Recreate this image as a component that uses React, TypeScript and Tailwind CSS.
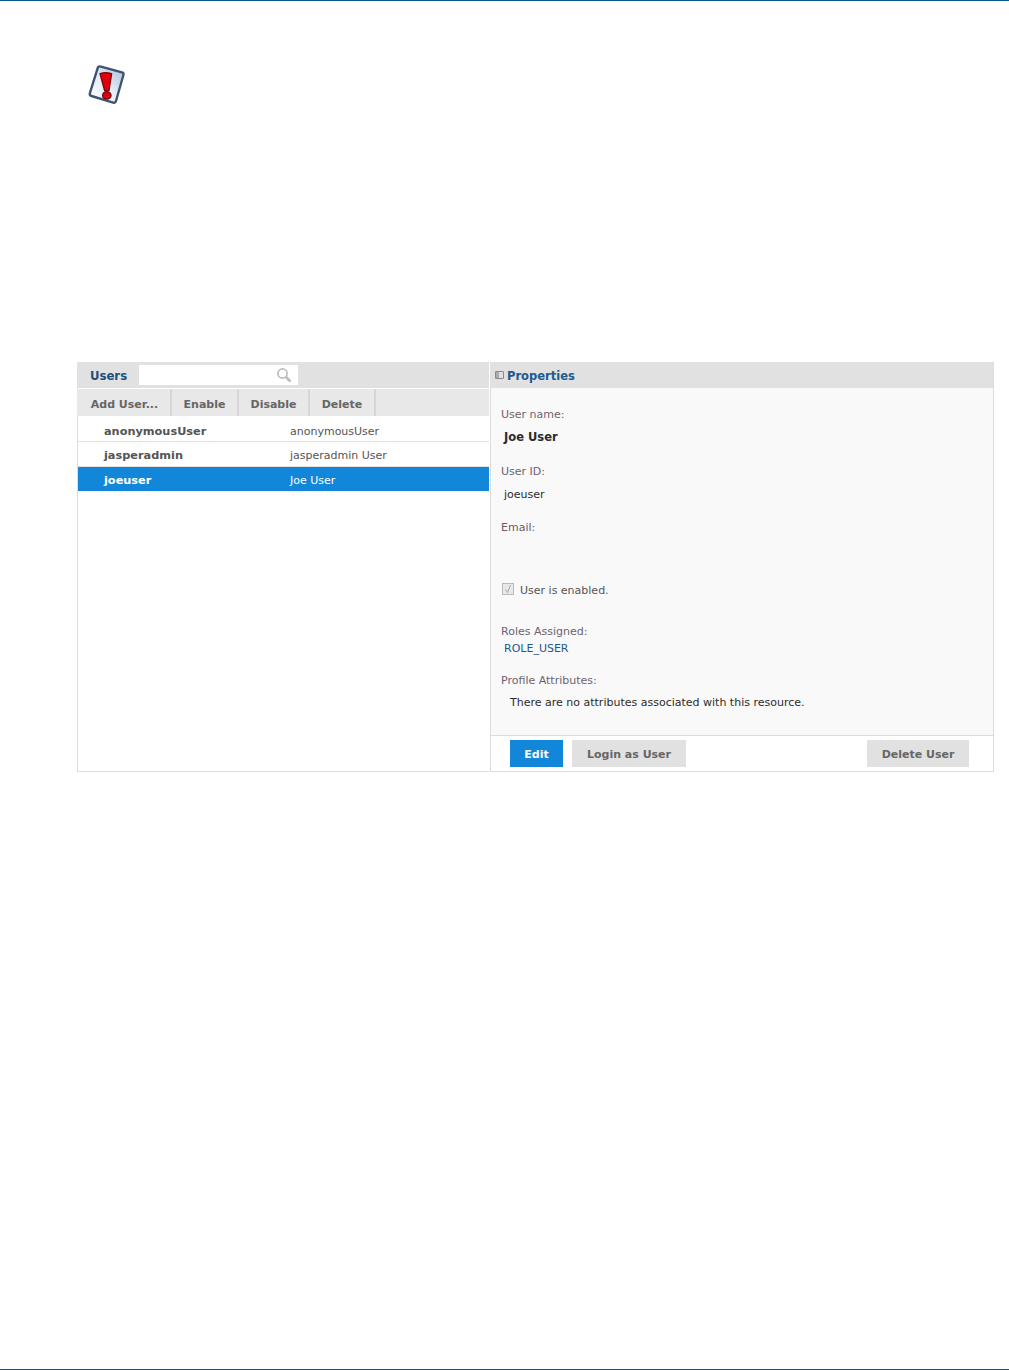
import React from 'react';

const font = 'font-["DejaVu_Sans",Verdana,sans-serif]';

const WarningIcon = () => (
  <svg width="42" height="42" viewBox="0 0 42 42" className="block">
    <defs>
      <linearGradient id="paper" x1="1" y1="0" x2="0" y2="1">
        <stop offset="0" stopColor="#a9bcdc" />
        <stop offset="0.5" stopColor="#e6ecf6" />
        <stop offset="1" stopColor="#ffffff" />
      </linearGradient>
    </defs>
    <path
      d="M12 3.2 Q13 2 15 2.6 L36 8.4 Q38 9 37.4 11 L30 37 Q29.4 39.2 27.2 38.6 L5.5 32 Q3.2 31.2 3.9 29 Z"
      fill="url(#paper)"
      stroke="#3f5475"
      strokeWidth="2.4"
      strokeLinejoin="round"
    />
    <path d="M14 9.6 Q19.5 7.8 25.6 9.6 L23 26.5 L18.6 26.5 Z" fill="#e2000f" stroke="#7a0a12" strokeWidth="1.4" strokeLinejoin="round" />
    <ellipse cx="20.8" cy="31.4" rx="4.2" ry="3.7" fill="#e2000f" stroke="#7a0a12" strokeWidth="1.4" />
  </svg>
);

const SearchIcon = () => (
  <svg width="16" height="16" viewBox="0 0 16 16" fill="none" stroke="#bdbdbd">
    <circle cx="6.5" cy="6.5" r="4.6" strokeWidth="1.7" />
    <path d="M10 10 L14.5 14.5" strokeWidth="2.6" />
  </svg>
);

const users = [
  { id: 'anonymousUser', name: 'anonymousUser', row: 'h-[26px] pt-[6px] border-b border-[#e2e2e2] text-[#555]', idClass: '' },
  { id: 'jasperadmin', name: 'jasperadmin User', row: 'h-[25px] pt-[2px] border-b border-[#e2e2e2] text-[#555]', idClass: 'mt-[2px]' },
  { id: 'joeuser', name: 'Joe User', row: 'h-6 pt-[2px] bg-[#1287d9] text-white', idClass: 'mt-[2px]' },
];

const tools = ['Add User...', 'Enable', 'Disable', 'Delete'];
const toolWidths = ['w-[95px]', 'w-[67px]', 'w-[71px]', 'w-[66px]'];

export default function App() {
  return (
    <div className={`${font} flex h-[1370px] flex-col justify-between bg-white`}>
      <div className="h-px bg-[#00598a]" />
      <div className="flex-1">
        <div className="mt-[63px] ml-[86px]">
          <WarningIcon />
        </div>
        <div className="mt-[256px] mr-[15px] ml-[77px] flex h-[410px] gap-px text-[11px] leading-none">
          <section className="flex w-[412px] flex-col border-b border-l border-[#dcdcdc]">
            <div className="-ml-px flex h-[26px] items-center bg-[#e1e1e1] pl-[13px]">
              <h2 className="mt-[3px] w-[49px] text-[11.7px] font-bold text-[#1c4f7c]">Users</h2>
              <div className="flex h-5 w-[159px] items-center justify-end bg-white pr-[6px]">
                <SearchIcon />
              </div>
            </div>
            <div className="mt-px -ml-px flex h-[27px] bg-[#e8e8e8]">
              {tools.map((t, i) => (
                <button key={t} className={`${toolWidths[i]} border-r-2 border-[#d6d6d6] pt-1 text-center text-[11px] font-bold text-[#666] ${i === 0 ? 'pl-[2px]' : ''}`}>
                  {t}
                </button>
              ))}
            </div>
            <div className="flex-1">
              {users.map((u) => (
                <div key={u.id} className={`flex items-center pl-[26px] ${u.row}`}>
                  <span className={`w-[186px] text-[11.3px] font-bold ${u.idClass}`}>{u.id}</span>
                  <span>{u.name}</span>
                </div>
              ))}
            </div>
          </section>
          <section className="flex flex-1 flex-col border-r border-b border-l border-[#dcdcdc]">
            <div className="-ml-px flex h-[26px] items-center gap-[3px] bg-[#e1e1e1] pl-[5px]">
              <span className="flex h-2 w-[9px] overflow-hidden rounded-[1px] border border-[#888]">
                <span className="w-[3px] bg-[#aaa]" />
              </span>
              <h2 className="mt-[3px] text-[11.5px] font-bold text-[#1c5a8f]">Properties</h2>
            </div>
            <div className="flex-1 bg-[#f9f9f9] pt-[21px] pl-[10px] text-[#555]">
              <p className="text-[#6b6470]">User name:</p>
              <p className="mt-3 ml-[3px] text-[11.5px] font-bold text-[#2b2b2b]">Joe User</p>
              <p className="mt-[22px] text-[#6b6470]">User ID:</p>
              <p className="mt-3 ml-[3px] text-[#2b2b2b]">joeuser</p>
              <p className="mt-[22px] text-[#6b5a66]">Email:</p>
              <div className="mt-[50px] ml-px flex items-start gap-[6px]">
                <span className="flex h-3 w-3 items-center justify-center border border-[#bbb] bg-[#e8e8e8]">
                  <svg width="8" height="10" viewBox="0 0 8 10" fill="none" stroke="#a8a8a8" strokeWidth="1">
                    <path d="M1.5 5.5 L3.5 8.5 L6.5 1" />
                  </svg>
                </span>
                <span className="mt-[2px]">User is enabled.</span>
              </div>
              <p className="mt-[30px] text-[#6b6470]">Roles Assigned:</p>
              <p className="mt-[6px] ml-[3px] text-[#1c5a8f]">ROLE_USER</p>
              <p className="mt-[21px] text-[#6b6470]">Profile Attributes:</p>
              <p className="mt-[11px] ml-[9px] text-[#2b2b2b]">There are no attributes associated with this resource.</p>
            </div>
            <div className="flex h-9 items-center justify-between border-t border-[#dcdcdc] pr-6 pl-[19px]">
              <div className="flex gap-[9px]">
                <button className="h-[27px] w-[53px] bg-[#1287d9] pt-[2px] text-[11px] font-bold text-white">Edit</button>
                <button className="h-[27px] w-[114px] bg-[#e1e1e1] pt-[2px] text-[11px] font-bold text-[#666]">Login as User</button>
              </div>
              <button className="h-[27px] w-[102px] bg-[#e1e1e1] pt-[2px] text-[11px] font-bold text-[#666]">Delete User</button>
            </div>
          </section>
        </div>
      </div>
      <div className="h-px bg-[#00598a]" />
    </div>
  );
}
